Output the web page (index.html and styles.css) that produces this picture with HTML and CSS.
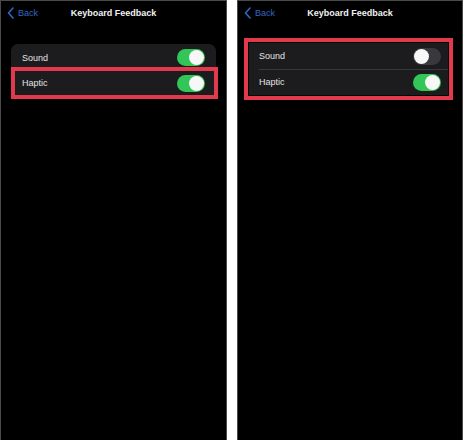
FILE: index.html
```html
<!DOCTYPE html>
<html lang="en">

<head>
    <meta charset="UTF-8">
    <title>Keyboard Feedback</title>
    <link rel="stylesheet" href="styles.css">
</head>

<body>
    <div class="shots">
        <!-- before -->
        <div class="phone">
            <div class="nav">
                <div class="back">
                    <svg width="7" height="12" viewBox="0 0 7 12"><path d="M6 1 L1.5 6 L6 11" fill="none" stroke="currentColor" stroke-width="1.6" stroke-linecap="round" stroke-linejoin="round"/></svg>
                    <span>Back</span>
                </div>
                <div class="title">Keyboard Feedback</div>
                <div></div>
            </div>
            <div class="group group1">
                <div class="row">
                    <span class="label">Sound</span>
                    <span class="switch on"><span class="knob"></span></span>
                </div>
                <div class="row hl">
                    <span class="label">Haptic</span>
                    <span class="switch on"><span class="knob"></span></span>
                </div>
            </div>
        </div>

        <!-- after -->
        <div class="phone phone2">
            <div class="nav">
                <div class="back">
                    <svg width="7" height="12" viewBox="0 0 7 12"><path d="M6 1 L1.5 6 L6 11" fill="none" stroke="currentColor" stroke-width="1.6" stroke-linecap="round" stroke-linejoin="round"/></svg>
                    <span>Back</span>
                </div>
                <div class="title">Keyboard Feedback</div>
                <div></div>
            </div>
            <div class="hlbox">
                <div class="group group2">
                    <div class="row">
                        <span class="label">Sound</span>
                        <span class="switch"><span class="knob"></span></span>
                    </div>
                    <div class="row sep">
                        <span class="label">Haptic</span>
                        <span class="switch on"><span class="knob"></span></span>
                    </div>
                </div>
            </div>
        </div>
    </div>
</body>

</html>
```

FILE: styles.css
```css
body {
    margin: 0;
    background: #fff;
    font-family: "Liberation Sans", Arial, sans-serif;
}

.shots {
    display: flex;
    gap: 10px;
    height: 440px;
}

.phone {
    width: 227px;
    height: 440px;
    box-sizing: border-box;
    background: #000;
    border: 1px solid #4a4a4a;
    border-bottom: none;
}

.phone2 {
    width: 226px;
}

.nav {
    height: 24px;
    display: grid;
    grid-template-columns: 1fr auto 1fr;
    align-items: center;
    padding: 0 6px;
}

.back {
    display: flex;
    align-items: center;
    gap: 4px;
    color: #3566c4;
    font-size: 9px;
}

.title {
    color: #f2f2f2;
    font-size: 9px;
    font-weight: bold;
}

.group {
    background: #1c1c1e;
    border-radius: 7px;
}

.group1 {
    margin: 19px 10px 0 10px;
}

.row {
    height: 27px;
    box-sizing: border-box;
    display: flex;
    align-items: center;
    justify-content: space-between;
    padding: 0 11px;
    position: relative;
}

.label {
    color: #e4e4e4;
    font-size: 9px;
}

/* red marker drawn over the haptic row */
.hl {
    height: 32px;
    border: 4px solid #e2394d;
    margin: -4px -2px -1px 0;
    padding: 0 9px 0 7px;
}

.hlbox {
    margin: 13px 9px 0 6px;
    border: 4px solid #e2394d;
    padding: 1px;
}

.group2 {
    border-radius: 0;
}

.group2 .row {
    height: 26px;
    padding: 0 7px 0 10px;
}

.sep::before {
    content: "";
    position: absolute;
    left: 10px;
    right: 0;
    top: 0;
    border-top: 1px solid #38383a;
}

.switch {
    width: 28px;
    height: 17px;
    border-radius: 9px;
    background: #39393d;
    display: flex;
    align-items: center;
    padding: 0 1px;
    box-sizing: border-box;
}

.switch.on {
    background: #32c659;
    justify-content: flex-end;
}

.knob {
    width: 15px;
    height: 15px;
    border-radius: 50%;
    background: #f7f7f7;
}
```
